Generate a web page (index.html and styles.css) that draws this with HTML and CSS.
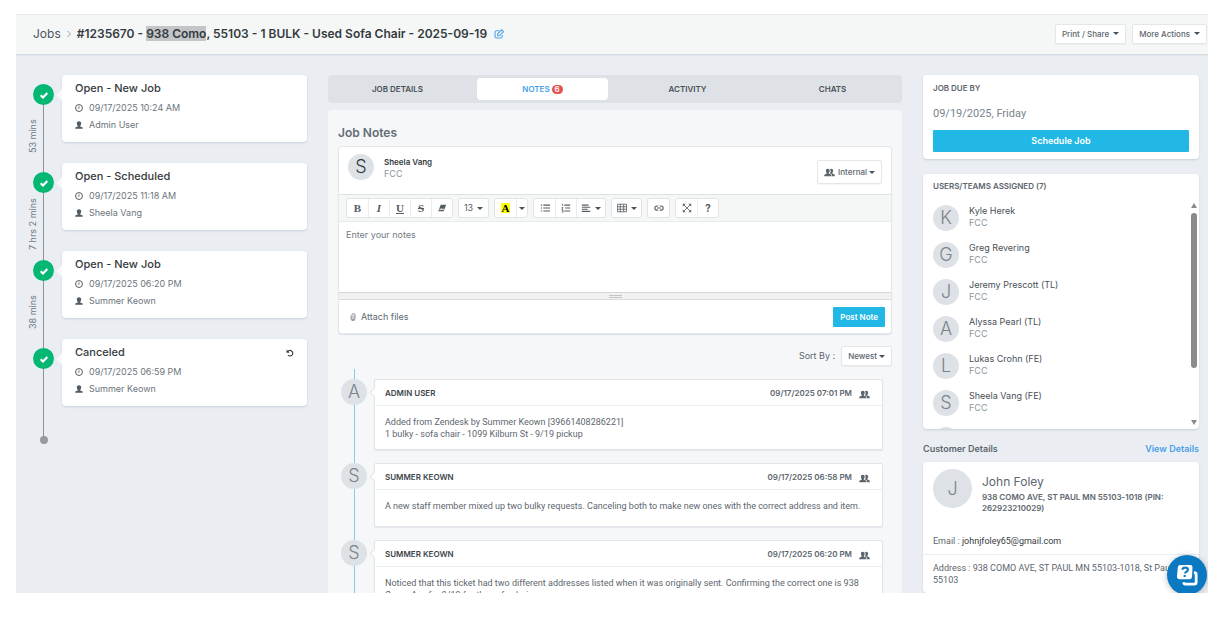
FILE: index.html
```html
<!DOCTYPE html>
<html lang="en">

<head>
    <meta charset="UTF-8">
    <meta name="viewport" content="width=device-width, initial-scale=1">
    <title>#1235670 - Jobs</title>
    <link rel="stylesheet" href="styles.css">
</head>

<body>
    <!-- shared icons -->
    <svg class="sprite" aria-hidden="true">
        <symbol id="i-check" viewBox="0 0 12 12">
            <path d="M2 6.4l2.7 2.6L10 3.6" fill="none" stroke="currentColor" stroke-width="2.6" />
        </symbol>
        <symbol id="i-clock" viewBox="0 0 12 12">
            <circle cx="6" cy="6" r="5.2" fill="none" stroke="currentColor" stroke-width="1.5" />
            <path d="M6.200 3v3.400H4" fill="none" stroke="currentColor" stroke-width="1" />
        </symbol>
        <symbol id="i-user" viewBox="0 0 12 12">
            <path d="M6 .3c2.200 0 3.300 1.400 3.300 3.400C9.300 5.300 8.600 6.500 7.800 7.200v.9l3 1.200c.7.300.9.9.9 2.400H.3c0-1.500.2-2.100.9-2.400l3-1.200v-.9C3.400 6.500 2.700 5.300 2.700 3.700 2.700 1.700 3.800.3 6 .3z" fill="currentColor" />
        </symbol>
        <symbol id="i-users" viewBox="0 0 16 12">
            <path d="M5.500.5c1.900 0 2.800 1.300 2.800 3 0 1.400-.5 2.400-1.300 3.100v.9l3 1.300c.7.300.9 1.200.9 2.700H.3c0-1.500.2-2.400.9-2.700L4 7.500v-.9C3.200 6 2.700 5 2.700 3.500c0-1.700.9-3 2.800-3z" fill="currentColor" />
            <path d="M8.700 1.300c.5-.5 1.100-.8 1.900-.8 1.800 0 2.700 1.300 2.700 3 0 1.400-.5 2.400-1.200 3v1l2.700 1.200c.7.300.9 1.300.9 2.800h-3.900c0-2-.4-3-1.500-3.500L8.700 7.300c.6-.9.900-2.400.9-3.600 0-.9-.3-1.700-.9-2.400z" fill="currentColor" />
        </symbol>
    </svg>

    <div class="app">
        <header class="topbar">
            <nav class="crumbs">
                <a href="#">Jobs</a>
                <svg class="crumb_sep" viewBox="0 0 6 8"><path d="M1.500 1l3 3-3 3" /></svg>
                <h1>#1235670 - <mark>938 Como</mark>, 55103 - 1 BULK - Used Sofa Chair - 2025-09-19</h1>
                <button class="icon_btn edit" aria-label="Edit title">
                    <svg viewBox="0 0 14 14"><path d="M11.500 8.500v2a2 2 0 0 1-2 2h-6a2 2 0 0 1-2-2v-6a2 2 0 0 1 2-2H7.500" /><path class="pen" d="M5 9.500V7L10.800 1.200l2.500 2.500L7.500 9.500z" /></svg>
                </button>
            </nav>
            <div class="actions">
                <button class="btn">Print / Share <i class="caret"></i></button>
                <button class="btn">More Actions <i class="caret"></i></button>
            </div>
        </header>

        <div class="columns">
            <aside class="history">
                <div class="event">
                    <div class="rail"><span class="dot"><svg><use href="#i-check" /></svg></span><span class="gap">53 mins</span></div>
                    <div class="card event_card">
                        <h2>Open - New Job</h2>
                        <p><svg><use href="#i-clock" /></svg>09/17/2025 10:24 AM</p>
                        <p><svg><use href="#i-user" /></svg>Admin User</p>
                    </div>
                </div>
                <div class="event">
                    <div class="rail"><span class="dot"><svg><use href="#i-check" /></svg></span><span class="gap">7 hrs 2 mins</span></div>
                    <div class="card event_card">
                        <h2>Open - Scheduled</h2>
                        <p><svg><use href="#i-clock" /></svg>09/17/2025 11:18 AM</p>
                        <p><svg><use href="#i-user" /></svg>Sheela Vang</p>
                    </div>
                </div>
                <div class="event">
                    <div class="rail"><span class="dot"><svg><use href="#i-check" /></svg></span><span class="gap">38 mins</span></div>
                    <div class="card event_card">
                        <h2>Open - New Job</h2>
                        <p><svg><use href="#i-clock" /></svg>09/17/2025 06:20 PM</p>
                        <p><svg><use href="#i-user" /></svg>Summer Keown</p>
                    </div>
                </div>
                <div class="event last">
                    <div class="rail"><span class="dot"><svg><use href="#i-check" /></svg></span></div>
                    <div class="card event_card">
                        <h2>Canceled
                            <button class="icon_btn undo" aria-label="Reopen">
                                <svg viewBox="0 0 12 12"><path d="M2.300 4.300A4.200 4.200 0 1 1 3 9.300" /><path class="head" d="M.8.800v4.700h4.700z" /></svg>
                            </button>
                        </h2>
                        <p><svg><use href="#i-clock" /></svg>09/17/2025 06:59 PM</p>
                        <p><svg><use href="#i-user" /></svg>Summer Keown</p>
                    </div>
                </div>
            </aside>

            <main>
                <nav class="tabs">
                    <button>JOB DETAILS</button>
                    <button class="active">NOTES <span class="badge">6</span></button>
                    <button>ACTIVITY</button>
                    <button>CHATS</button>
                </nav>

                <section class="panel">
                    <h2 class="panel_title">Job Notes</h2>

                    <form class="editor">
                        <div class="editor_head">
                            <span class="avatar dark">S</span>
                            <div class="who">
                                <b>Sheela Vang</b>
                                <small>FCC</small>
                            </div>
                            <button type="button" class="btn internal"><svg class="users"><use href="#i-users" /></svg> Internal <i class="caret"></i></button>
                        </div>
                        <div class="toolbar">
                            <div class="group">
                                <button type="button" class="serif bold">B</button>
                                <button type="button" class="serif italic">I</button>
                                <button type="button" class="serif under">U</button>
                                <button type="button" class="serif strike">S</button>
                                <button type="button" aria-label="Clear formatting"><svg viewBox="0 0 12 12"><path class="fill" d="M4.500 2h6.500L8 10H1.500z" /><path class="cut" d="M3 7.500h5.200" /></svg></button>
                            </div>
                            <div class="group"><button type="button" class="wide">13 <i class="caret"></i></button></div>
                            <div class="group">
                                <button type="button" class="serif"><span class="hilite">A</span></button>
                                <button type="button" class="slim" aria-label="More colors"><i class="caret"></i></button>
                            </div>
                            <div class="group">
                                <button type="button" aria-label="Bullets"><svg viewBox="0 0 12 12"><path d="M1 2.500h1.500M1 6h1.500M1 9.500h1.500M4 2.500h8M4 6h8M4 9.500h8" /></svg></button>
                                <button type="button" aria-label="Numbering"><svg viewBox="0 0 12 12"><path d="M4 2.500h7M5 6h6M4 9.500h7" /><path class="thin" d="M1 1.500h1v2M1 5.500h1.500L1 7.500h1.500M1 9h1.500v2H1" /></svg></button>
                                <button type="button" class="wide" aria-label="Align"><svg viewBox="0 0 12 12"><path d="M1 2.500h8M1 5h10M1 7.500h7M1 10h10" /></svg><i class="caret"></i></button>
                            </div>
                            <div class="group"><button type="button" class="wide" aria-label="Table"><svg viewBox="0 0 12 12"><path class="thin" d="M.5 1.500h11v9H.5zM.5 4.500h11M.5 7.500h11M4 1.500v9M8 1.500v9" /></svg><i class="caret"></i></button></div>
                            <div class="group"><button type="button" aria-label="Link"><svg viewBox="0 0 12 12"><path d="M5 3.500H3.500a2.500 2.500 0 0 0 0 5H5M7 3.500h1.500a2.500 2.500 0 0 1 0 5H7M3.800 6h4.400" /></svg></button></div>
                            <div class="group">
                                <button type="button" aria-label="Full screen"><svg viewBox="0 0 12 12"><path class="thin" d="M2.500 2.500l7 7M9.500 2.500l-7 7" /><path class="fill" d="M1 1h3.200L1 4.200zM11 1v3.200L7.800 1zM1 11V7.800L4.200 11zM11 11H7.800L11 7.800z" /></svg></button>
                                <button type="button" class="help">?</button>
                            </div>
                        </div>
                        <textarea aria-label="Note" placeholder="Enter your notes"></textarea>
                        <div class="grip"><i></i></div>
                        <div class="editor_foot">
                            <button type="button" class="attach"><svg viewBox="0 0 8 12"><path d="M5.500 3.500v5a1.500 1.500 0 0 1-3 0V3a1.500 1.500 0 0 1 4.500 0v5.500a3 3 0 0 1-6 0V4" /></svg>Attach files</button>
                            <button type="button" class="primary">Post Note</button>
                        </div>
                    </form>

                    <div class="sort">
                        <span>Sort By :</span>
                        <button class="btn">Newest <i class="caret"></i></button>
                    </div>

                    <div class="notes">
                        <article class="note">
                            <span class="avatar">A</span>
                            <div class="note_card">
                                <header><h3>ADMIN USER</h3><time>09/17/2025 07:01 PM</time><svg class="users"><use href="#i-users" /></svg></header>
                                <p>Added from Zendesk by Summer Keown [39661408286221]<br>1 bulky - sofa chair - 1099 Kilburn St - 9/19 pickup</p>
                            </div>
                        </article>
                        <article class="note">
                            <span class="avatar">S</span>
                            <div class="note_card">
                                <header><h3>SUMMER KEOWN</h3><time>09/17/2025 06:58 PM</time><svg class="users"><use href="#i-users" /></svg></header>
                                <p>A new staff member mixed up two bulky requests. Canceling both to make new ones with the correct address and item.</p>
                            </div>
                        </article>
                        <article class="note">
                            <span class="avatar">S</span>
                            <div class="note_card">
                                <header><h3>SUMMER KEOWN</h3><time>09/17/2025 06:20 PM</time><svg class="users"><use href="#i-users" /></svg></header>
                                <p>Noticed that this ticket had two different addresses listed when it was originally sent. Confirming the correct one is 938 Como Ave for 9/19 for the sofa chair.</p>
                            </div>
                        </article>
                    </div>
                </section>
            </main>

            <aside class="side">
                <section class="card due">
                    <h3>JOB DUE BY</h3>
                    <p>09/19/2025, Friday</p>
                    <button class="primary">Schedule Job</button>
                </section>

                <section class="card team">
                    <h3>USERS/TEAMS ASSIGNED (7)</h3>
                    <div class="team_body">
                        <ul>
                            <li><span class="avatar">K</span><div class="who"><span>Kyle Herek</span><small>FCC</small></div></li>
                            <li><span class="avatar">G</span><div class="who"><span>Greg Revering</span><small>FCC</small></div></li>
                            <li><span class="avatar">J</span><div class="who"><span>Jeremy Prescott (TL)</span><small>FCC</small></div></li>
                            <li><span class="avatar">A</span><div class="who"><span>Alyssa Pearl (TL)</span><small>FCC</small></div></li>
                            <li><span class="avatar">L</span><div class="who"><span>Lukas Crohn (FE)</span><small>FCC</small></div></li>
                            <li><span class="avatar">S</span><div class="who"><span>Sheela Vang (FE)</span><small>FCC</small></div></li>
                            <li><span class="avatar"></span></li>
                        </ul>
                        <div class="scrollbar"><i class="up"></i><i class="thumb"></i><i class="down"></i></div>
                    </div>
                </section>

                <div class="side_head">
                    <h3>Customer Details</h3>
                    <a href="#">View Details</a>
                </div>
                <section class="card customer">
                    <div class="person">
                        <span class="avatar big">J</span>
                        <div>
                            <h2>John Foley</h2>
                            <b>938 COMO AVE, ST PAUL MN 55103-1018 (PIN: 262923210029)</b>
                        </div>
                    </div>
                    <p class="email">Email : <a href="#">johnjfoley65@gmail.com</a></p>
                    <p class="address">Address : 938 COMO AVE, ST PAUL MN 55103-1018, St Paul, 55103</p>
                </section>
            </aside>
        </div>

        <button class="chat" aria-label="Help">
            <svg viewBox="0 0 24 24">
                <path d="M19.500 9.500h.5a2 2 0 0 1 2 2v8.500a2 2 0 0 1-2 2H10.500a2 2 0 0 1-2-2" fill="none" stroke="#fff" stroke-width="3" />
                <path d="M5 1h10.500a2.500 2.500 0 0 1 2.500 2.500l-.5 10.500a2.500 2.500 0 0 1-2.500 2.500H3.500A2.500 2.500 0 0 1 1 14l1-10.500A2.800 2.800 0 0 1 5 1z" fill="#fff" />
                <path d="M6.800 6.300c.4-1.600 1.500-2.400 3.200-2.400 1.800 0 3 .9 3 2.300 0 2.100-3 1.900-3.200 4.200M9.500 12v2.200" fill="none" stroke="#0b78c2" stroke-width="2.300" />
            </svg>
        </button>
    </div>
</body>

</html>
```
FILE: styles.css
```css
* {
    box-sizing: border-box;
}

body {
    margin: 0;
    padding: 14px 15px 25px 16px;
    background: #fff;
    font-family: Inter, "Liberation Sans", sans-serif;
    font-size: 9px;
    line-height: 12px;
    color: #5d666e;
}

h1, h2, h3, p, ul {
    margin: 0;
    padding: 0;
}

ul {
    list-style: none;
}

a {
    color: inherit;
    text-decoration: none;
}

button {
    font: inherit;
    color: inherit;
    padding: 0;
    border: 0;
    background: none;
    cursor: pointer;
}

svg {
    flex: none;
    width: 10px;
    height: 10px;
}

.sprite {
    position: absolute;
    width: 0;
    height: 0;
}

.app {
    position: relative;
    height: calc(100vh - 39px);
    overflow: hidden;
    background: #eaedf2;
}

/* top bar */
.topbar {
    position: relative;
    display: flex;
    align-items: center;
    justify-content: space-between;
    height: 40px;
    padding: 0 1px 2px 17px;
    background: #f5f7f7;
    border-top: 1px solid #e8eaea;
    box-shadow: 0 1px 2px rgba(120, 140, 160, .25);
}

.crumbs {
    display: flex;
    align-items: center;
    font-size: 12px;
    line-height: 16px;
    color: #4c545b;
}

.crumb_sep {
    width: 6px;
    height: 8px;
    margin: 0 5px;
    fill: none;
    stroke: #9aa3aa;
}

.crumbs h1 {
    font-size: 12px;
    line-height: 17px;
    font-weight: 600;
    color: #343a40;
}

mark {
    color: inherit;
    background: #c3c5c6;
}

.icon_btn {
    display: flex;
}

.icon_btn svg {
    fill: none;
    stroke: currentColor;
}

.edit {
    margin-left: 7px;
    color: #4ba3ea;
}

.edit svg {
    stroke-width: 1.5;
}

.actions {
    display: flex;
    gap: 6px;
}

.btn {
    display: flex;
    align-items: center;
    height: 20px;
    padding: 0 6px;
    border: 1px solid #e4e7ea;
    border-radius: 2px;
    background: #fff;
    box-shadow: 0 1px 1px rgba(0, 0, 0, .04);
    font-size: 8px;
    font-weight: 500;
    white-space: nowrap;
}

.actions .caret {
    margin-left: 4px;
}

.caret {
    flex: none;
    margin-left: 2px;
    border: 3px solid transparent;
    border-top: 3px solid #495057;
    border-bottom: 0;
}

.columns {
    display: grid;
    grid-template-columns: 279px minmax(0, 1fr) 276px;
    gap: 21px;
    align-items: start;
    padding: 21px 9px 0 12px;
}

.card {
    background: #fff;
    border-radius: 4px;
    box-shadow: 0 1px 2px rgba(120, 140, 160, .3);
}

/* job history */
.event {
    display: flex;
    gap: 8px;
}

.rail {
    position: relative;
    width: 26px;
    display: flex;
    flex-direction: column;
    align-items: flex-end;
    padding-top: 9px;
}

.rail::before {
    content: "";
    position: absolute;
    top: 20px;
    bottom: -20px;
    right: 10px;
    width: 1px;
    background: #8f9295;
}

.dot {
    position: relative;
    display: flex;
    align-items: center;
    justify-content: center;
    width: 21px;
    height: 21px;
    border-radius: 50%;
    background: #06b774;
    color: #fff;
}

.gap {
    display: flex;
    align-items: center;
    justify-content: center;
    flex: 1;
    align-self: flex-start;
    writing-mode: vertical-rl;
    transform: rotate(180deg);
    width: 10px;
    margin-top: 5px;
    line-height: 10px;
    color: #6f777e;
}

.event_card {
    position: relative;
    flex: 1;
    min-height: 67px;
    margin-bottom: 21px;
    padding: 6px 13px;
}

.event_card::before {
    content: "";
    position: absolute;
    left: -6px;
    top: 14px;
    border: 6px solid transparent;
    border-right-color: #f7f8fa;
    border-left: 0;
}

.event_card h2 {
    display: flex;
    justify-content: space-between;
    align-items: center;
    margin-bottom: 3px;
    font-size: 11px;
    line-height: 15px;
    font-weight: 500;
    color: #343a40;
}

.event_card p {
    display: flex;
    align-items: center;
    gap: 6px;
    height: 17px;
    color: #6c757d;
}

.event_card p svg {
    width: 8px;
    height: 8px;
    color: #545c64;
}

.undo svg {
    width: 8px;
    height: 8px;
    stroke-width: 1.7;
}

.undo .head {
    fill: currentColor;
    stroke: none;
}

.last .rail::before {
    bottom: -14px;
}

.last .rail::after {
    content: "";
    position: absolute;
    bottom: -17px;
    right: 6px;
    width: 8px;
    height: 8px;
    border-radius: 50%;
    background: #999;
}

/* tabs */
.tabs {
    display: grid;
    grid-template-columns: repeat(4, 1fr);
    gap: 14px;
    height: 28px;
    padding: 3px 4px;
    margin-bottom: 7px;
    border-radius: 4px;
    background: #dee2e6;
}

.tabs button {
    display: flex;
    align-items: center;
    justify-content: center;
    gap: 2px;
    border-radius: 4px;
    font-size: 8px;
    font-weight: 600;
    color: #495057;
}

.tabs .active {
    background: #fff;
    color: #4a9fe8;
}

.badge {
    width: 11px;
    border-radius: 5px;
    background: #e35252;
    color: #fff;
    line-height: 9px;
}

/* notes panel */
.panel {
    min-height: 500px;
    padding: 15px 10px 0;
    border-radius: 4px;
    background: #f5f7f9;
}

.panel_title {
    margin-bottom: 5px;
    font-size: 12px;
    line-height: 16px;
    font-weight: 600;
    color: #646d75;
}

.editor {
    border: 1px solid #e4e8eb;
    border-radius: 4px;
    background: #fff;
    box-shadow: 0 1px 1px rgba(120, 140, 160, .2);
}

.avatar {
    flex: none;
    display: flex;
    align-items: center;
    justify-content: center;
    width: 26px;
    height: 26px;
    border-radius: 50%;
    background: #dee2e6;
    font-size: 18px;
    font-weight: 300;
    color: #7b848c;
}

.avatar.dark {
    color: #343a40;
}

.who {
    display: flex;
    flex-direction: column;
}

.who b {
    font-size: 8px;
    font-weight: 600;
    color: #343a40;
}

.who small {
    font-size: 9px;
    color: #8c959d;
}

.editor_head {
    display: flex;
    align-items: flex-start;
    gap: 10px;
    height: 47px;
    padding: 7px 9px 0;
}

.editor_head .who {
    padding-top: 3px;
    line-height: 11px;
}

.internal {
    height: 24px;
    margin: 6px 0 0 auto;
}

.users {
    width: 11px;
    height: 9px;
}

.internal .users {
    margin-right: 3px;
}

.toolbar {
    display: flex;
    gap: 5px;
    padding: 3px 7px;
    border-top: 1px solid #dee2e6;
    border-bottom: 1px solid #e9ecef;
    background: #f5f7f7;
}

.group {
    display: flex;
    border: 1px solid #e1e5e8;
    border-radius: 3px;
    background: #fff;
}

.group button {
    display: flex;
    align-items: center;
    justify-content: center;
    width: 21px;
    height: 18px;
    border-left: 1px solid #e9ecef;
    color: #555d64;
}

.group button:first-child {
    border-left: 0;
}

.group svg {
    width: 10px;
    height: 10px;
    fill: none;
    stroke: currentColor;
    stroke-width: 1.3;
}

.group svg .fill {
    fill: currentColor;
    stroke: none;
}

.group svg .cut {
    stroke: #fff;
}

.group svg .thin {
    stroke-width: 1;
}

.group .wide {
    width: 29px;
    gap: 2px;
}

.group .slim {
    width: 11px;
}

.slim .caret {
    margin-left: 0;
}

.serif {
    font: bold 11px "Liberation Serif", serif;
}

.italic {
    font-style: italic;
}

.under {
    text-decoration: underline;
}

.strike {
    text-decoration: line-through;
}

.help {
    font-size: 10px;
    font-weight: 700;
}

.hilite {
    padding: 0 1px;
    line-height: 10px;
    background: #ff0;
    color: #000;
}

.editor textarea {
    display: block;
    width: 100%;
    height: 70px;
    padding: 7px;
    border: 0;
    background: none;
    resize: none;
    font: inherit;
}

.editor textarea::placeholder {
    color: #737b82;
}

.grip {
    display: flex;
    justify-content: center;
    padding-top: 2px;
    height: 8px;
    border-top: 1px solid #d5d8da;
    border-bottom: 1px solid #d9dcde;
    background: #f1f1f1;
}

.grip i {
    width: 13px;
    height: 3px;
    border: 1px solid #c2c4c6;
    border-width: 1px 0;
}

.editor_foot {
    display: flex;
    align-items: center;
    justify-content: space-between;
    height: 33px;
    padding: 0 6px 0 11px;
}

.attach {
    display: flex;
    align-items: center;
    gap: 5px;
}

.attach svg {
    width: 6px;
    height: 8px;
    fill: none;
    stroke: currentColor;
}

.primary {
    height: 20px;
    padding: 0 7px;
    border-radius: 1px;
    background: #22b8e6;
    color: #fff;
    font-size: 8px;
    font-weight: 600;
}

.sort {
    display: flex;
    align-items: center;
    justify-content: flex-end;
    gap: 6px;
    margin-top: 12px;
}

.notes {
    position: relative;
    display: flex;
    flex-direction: column;
    gap: 13px;
    margin-top: 3px;
    padding: 10px 9px 0 3px;
}

.notes::before {
    content: "";
    position: absolute;
    top: 0;
    bottom: 0;
    left: 16px;
    width: 1px;
    background: #86cce3;
}

.note {
    position: relative;
    display: flex;
    gap: 7px;
}

.note_card {
    position: relative;
    flex: 1;
    min-height: 64px;
    border: 1px solid #e1e5e8;
    border-radius: 2px;
    background: #fff;
    box-shadow: 0 1px 1px rgba(120, 140, 160, .15);
}

.note_card::before {
    content: "";
    position: absolute;
    left: -4px;
    top: 9px;
    width: 6px;
    height: 6px;
    border: 1px solid #e1e5e8;
    border-width: 0 0 1px 1px;
    background: #fff;
    transform: rotate(45deg);
}

.note_card header {
    display: flex;
    align-items: center;
    gap: 7px;
    height: 26px;
    padding: 0 12px 0 10px;
    border-bottom: 1px solid #eceff1;
}

.note_card h3 {
    margin-right: auto;
    font-size: 8px;
    font-weight: 600;
    color: #3d454c;
}

.note_card time {
    font-size: 8px;
    font-weight: 600;
}

.note_card .users {
    margin-top: 3px;
}

.note_card p {
    padding: 10px 10px 9px;
}

/* running text */
.note_card p,
.due p,
.customer p {
    font-family: Roboto, "Liberation Sans", sans-serif;
}

/* right column */
.side h3 {
    font-size: 8px;
    font-weight: 600;
}

.due {
    display: flex;
    flex-direction: column;
    padding: 7px 10px;
    margin-bottom: 15px;
}

.due p {
    margin: 12px 0 8px;
    font-size: 11px;
    line-height: 16px;
    color: #7a838b;
}

.due .primary {
    height: 22px;
    font-size: 9px;
}

.team {
    height: 255px;
    padding: 6px 0 0 10px;
    overflow: hidden;
}

.team_body {
    display: flex;
    justify-content: space-between;
    margin-top: 9px;
}

.team li {
    display: flex;
    gap: 10px;
    height: 37px;
    padding-top: 4px;
}

.team .who span {
    color: #495057;
}

.scrollbar {
    display: flex;
    flex-direction: column;
    align-items: center;
    width: 10px;
    height: 224px;
    padding-top: 2px;
}

.scrollbar .up,
.scrollbar .down {
    border: 3px solid transparent;
    border-bottom: 5px solid #8b8b8b;
    border-top: 0;
}

.scrollbar .down {
    margin-top: auto;
    border-top: 5px solid #8b8b8b;
    border-bottom: 0;
}

.scrollbar .thumb {
    width: 6px;
    height: 155px;
    margin-top: 5px;
    border-radius: 3px;
    background: #8b8b8b;
}

.side_head {
    display: flex;
    justify-content: space-between;
    margin: 14px 0 7px;
    font-weight: 600;
}

.side_head h3 {
    font-size: 9px;
}

.side_head a {
    color: #4a9fe8;
}

.person {
    display: flex;
    gap: 10px;
    padding: 7px 10px 0;
}

.avatar.big {
    width: 39px;
    height: 39px;
}

.person h2 {
    margin: 5px 0 2px;
    font-size: 12px;
    line-height: 16px;
    font-weight: 400;
}

.person b {
    display: block;
    font-size: 8px;
    line-height: 11px;
    font-weight: 600;
}

.customer p {
    padding: 7px 10px;
}

.customer .email {
    margin-top: 14px;
    border-bottom: 1px solid #eceff1;
}

.email a {
    color: #343a40;
}

.chat {
    position: absolute;
    right: 1px;
    bottom: -2px;
    display: flex;
    align-items: center;
    justify-content: center;
    width: 40px;
    height: 40px;
    border-radius: 50%;
    background: #0b78c2;
    box-shadow: 0 1px 6px rgba(0, 0, 0, .25);
}

.chat svg {
    width: 22px;
    height: 22px;
}
```
